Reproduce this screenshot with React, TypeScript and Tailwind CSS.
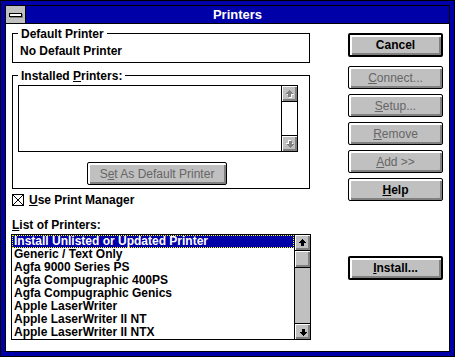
import React from 'react';

const printers = [
  'Install Unlisted or Updated Printer',
  'Generic / Text Only',
  'Agfa 9000 Series PS',
  'Agfa Compugraphic 400PS',
  'Agfa Compugraphic Genics',
  'Apple LaserWriter',
  'Apple LaserWriter II NT',
  'Apple LaserWriter II NTX',
];

const ARROW = 'M3 0h1v1h1v1h1v1h1v1H5v3H2V4H0V3h1V2h1V1h1z';

function Arrow({ down, disabled }: { down?: boolean; disabled?: boolean }) {
  return (
    <svg
      width="8"
      height="8"
      viewBox="0 0 8 8"
      shapeRendering="crispEdges"
      className={down ? 'rotate-180' : ''}
    >
      {disabled && <path d={ARROW} fill="#ffffff" transform="translate(1 1)" />}
      <path d={ARROW} fill={disabled ? '#808080' : '#000000'} />
    </svg>
  );
}

function ScrollButton({ down, disabled }: { down?: boolean; disabled?: boolean }) {
  return (
    <div className="h-[15px] flex items-center justify-center bg-[#c0c0c0] shadow-[inset_1px_1px_0_#ffffff,inset_-2px_-2px_0_#808080]">
      <Arrow down={down} disabled={disabled} />
    </div>
  );
}

function Button({
  children,
  def,
  disabled,
  className = '',
}: {
  children: React.ReactNode;
  def?: boolean;
  disabled?: boolean;
  className?: string;
}) {
  return (
    <div
      className={`flex items-center justify-center bg-[#c0c0c0] border-black rounded-[2px] ${
        def ? 'border-2 h-[24px]' : 'border h-[23px]'
      } shadow-[inset_2px_2px_0_#ffffff,inset_-2px_-2px_0_#808080] ${
        disabled ? 'text-[#666666] font-normal' : 'text-black'
      } ${className}`}
    >
      <span className="leading-[14px]">{children}</span>
    </div>
  );
}

function GroupLabel({ children }: { children: React.ReactNode }) {
  return (
    <span className="absolute left-[5px] top-[-7px] px-[3px] bg-white leading-[14px]">{children}</span>
  );
}

export default function App() {
  return (
    <div className="w-[455px] h-[357px] bg-[#0000a8] border border-black p-[4px] font-['Liberation_Sans',Arial,sans-serif] text-[12px] font-bold text-black">
      <div className="h-full flex flex-col border border-black">
        {/* title bar */}
        <div className="h-[18px] flex border-b border-black bg-[#0000a8]">
          <div className="w-[20px] flex items-center justify-center bg-[#c0c0c0] border-r border-black">
            <div className="w-[13px] h-[4px] bg-white border border-black shadow-[1px_1px_0_#808080]" />
          </div>
          <div className="flex-1 flex items-center justify-center text-white text-[13px] leading-[16px] pt-[1px]">
            Printers
          </div>
        </div>

        {/* client area */}
        <div className="flex-1 flex bg-white pt-[9px] pl-[6px]">
          <div className="w-[298px] flex flex-col">
            <div className="relative h-[30px] border border-black pt-[10px] pl-[7px] leading-[14px]">
              <GroupLabel>Default Printer</GroupLabel>
              No Default Printer
            </div>

            <div className="relative mt-[12px] h-[114px] border border-black pt-[9px] pl-[5px] flex flex-col">
              <GroupLabel>
                Installed <u>P</u>rinters:
              </GroupLabel>
              <div className="w-[280px] h-[67px] flex border border-black bg-white">
                <div className="flex-1" />
                <div className="w-[16px] flex flex-col border-l border-black">
                  <div className="border-b border-black">
                    <ScrollButton disabled />
                  </div>
                  <div className="flex-1 bg-white" />
                  <div className="border-t border-black">
                    <ScrollButton down disabled />
                  </div>
                </div>
              </div>
              <Button disabled className="mt-[10px] ml-[69px] w-[140px]">
                S<u>e</u>t As Default Printer
              </Button>
            </div>

            <div className="mt-[4px] flex items-start gap-[5px] leading-[14px]">
              <svg width="12" height="12" viewBox="0 0 12 12" shapeRendering="crispEdges" className="mt-[1px]">
                <rect x="0.5" y="0.5" width="11" height="11" fill="#fff" stroke="#000" />
                <path d="M1 1L11 11M11 1L1 11" stroke="#000" strokeWidth="1" shapeRendering="auto" />
              </svg>
              <span>
                <u>U</u>se Print Manager
              </span>
            </div>

            <div className="mt-[11px] leading-[14px]">
              <u>L</u>ist of Printers:
            </div>

            <div className="mt-[2px] ml-[-1px] w-[300px] h-[106px] flex border border-black bg-white">
              <div className="flex-1 flex flex-col">
                {printers.map((p, i) => (
                  <div
                    key={p}
                    className={`h-[13px] leading-[13px] pl-[2px] whitespace-nowrap ${
                      i === 0
                        ? 'bg-[#0000a8] text-white outline outline-1 outline-dotted outline-[#ffff00] -outline-offset-1'
                        : ''
                    }`}
                  >
                    {p}
                  </div>
                ))}
              </div>
              <div className="w-[16px] flex flex-col border-l border-black bg-[#c0c0c0]">
                <div className="border-b border-black">
                  <ScrollButton />
                </div>
                <div className="h-[17px] border-b border-black">
                  <div className="h-[16px] bg-[#c0c0c0] shadow-[inset_1px_1px_0_#ffffff,inset_-2px_-2px_0_#808080]" />
                </div>
                <div className="flex-1" />
                <div className="border-t border-black">
                  <ScrollButton down />
                </div>
              </div>
            </div>
          </div>

          <div className="ml-[38px] w-[95px] flex flex-col">
            <Button def>Cancel</Button>
            <Button disabled className="mt-[9px]">
              <u>C</u>onnect...
            </Button>
            <Button disabled className="mt-[5px]">
              <u>S</u>etup...
            </Button>
            <Button disabled className="mt-[5px]">
              <u>R</u>emove
            </Button>
            <Button disabled className="mt-[5px]">
              <u>A</u>dd &gt;&gt;
            </Button>
            <Button className="mt-[5px]">
              <u>H</u>elp
            </Button>
            <Button def className="mt-[55px]">
              <u>I</u>nstall...
            </Button>
          </div>
        </div>
      </div>
    </div>
  );
}
